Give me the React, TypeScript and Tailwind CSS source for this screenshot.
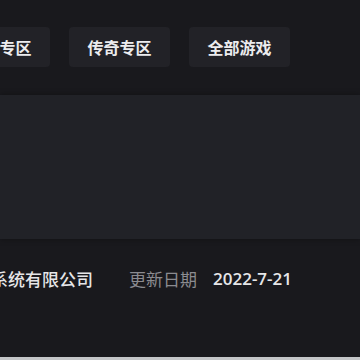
const tabs = ['精品专区', '传奇专区', '全部游戏'];

export default function App() {
  return (
    <div
      className="w-[360px] h-[360px] overflow-hidden bg-[#19191d] flex flex-col"
      style={{ fontFamily: '"Noto Sans CJK SC", "Liberation Sans", sans-serif' }}
    >
      <div className="flex gap-[19px] ml-[-51px] mt-[27px] shrink-0">
        {tabs.map((t) => (
          <div
            key={t}
            className="w-[101px] h-[40px] shrink-0 rounded-[4px] bg-[#222227] flex items-center justify-center text-[16px] font-semibold text-[#ececee]"
          >
            {t}
          </div>
        ))}
      </div>

      <div className="mt-[28px] h-[144px] shrink-0 bg-[#212227] shadow-[0_0_6px_rgba(0,0,0,0.35)]" />

      <div className="flex items-center mt-[30px] h-[20px] text-[17px] shrink-0 whitespace-nowrap">
        <span className="ml-[-145px] text-[#e6e6e8] font-medium">深圳市腾讯计算机系统有限公司</span>
        <span className="ml-[36px] text-[#8b8b90]">更新日期</span>
        <span className="ml-[16px] text-[#e6e6e8] font-semibold" style={{ fontFamily: '"Open Sans", "Liberation Sans", sans-serif' }}>2022-7-21</span>
      </div>

      <div className="flex-1" />
      <div className="h-[3px] bg-[#c4c6c8] shrink-0" />
    </div>
  );
}
